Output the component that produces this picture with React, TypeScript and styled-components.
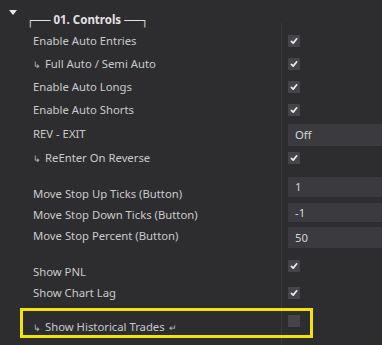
import styled, { createGlobalStyle } from "styled-components";

type Prop = {
  label: string;
  kind: "check" | "empty" | "input";
  value?: string;
  sub?: boolean;
  ret?: boolean;
  h: number;
  lp: number;
  vp: number;
  ih?: number;
  mark?: boolean;
};

const Props: Prop[] = [
  { label: "Enable Auto Entries", kind: "check", h: 23, lp: 3, vp: 5 },
  { label: "Full Auto / Semi Auto", kind: "check", sub: true, h: 23, lp: 3, vp: 5 },
  { label: "Enable Auto Longs", kind: "check", h: 23, lp: 3, vp: 5 },
  { label: "Enable Auto Shorts", kind: "check", h: 23, lp: 3, vp: 5 },
  { label: "REV - EXIT", kind: "input", value: "Off", h: 25, lp: 4, vp: 2, ih: 22 },
  { label: "ReEnter On Reverse", kind: "check", sub: true, h: 23, lp: 3, vp: 5 },
  { label: "Move Stop Up Ticks (Button)", kind: "input", value: "1", h: 30, lp: 16, vp: 7, ih: 20 },
  { label: "Move Stop Down Ticks (Button)", kind: "input", value: "-1", h: 25, lp: 7, vp: 3, ih: 19 },
  { label: "Move Stop Percent (Button)", kind: "input", value: "50", h: 25, lp: 3, vp: 2, ih: 21 },
  { label: "Show PNL", kind: "check", h: 32, lp: 14, vp: 10 },
  { label: "Show Chart Lag", kind: "check", h: 24, lp: 3, vp: 5 },
  { label: "Show Historical Trades", kind: "empty", sub: true, ret: true, h: 39, lp: 13, vp: 9, mark: true },
];

export default function App() {
  return (
    <>
      <GlobalStyle />
      <Panel>
        <Header>
          <Category>
            <Caret />
            <Title>┌── 01. Controls ──┐</Title>
          </Category>
          <Divider />
        </Header>
        {Props.map((p) => (
          <Row key={p.label} $h={p.h}>
            <Label $pt={p.lp}>
              {p.sub && <Hook>↳</Hook>}
              {p.label}
              {p.ret && <Ret>↵</Ret>}
            </Label>
            <Value $pt={p.vp}>
              {p.kind === "input" ? (
                <Input $h={p.ih || 21}>{p.value}</Input>
              ) : (
                <Check>
                  {p.kind === "check" && (
                    <svg width="12" height="12" viewBox="0 0 12 12">
                      <path
                        d="M3.4 6.3 L5.2 8.1 L8.7 3.8"
                        fill="none"
                        stroke="#ececec"
                        strokeWidth="1.7"
                        strokeLinecap="round"
                        strokeLinejoin="round"
                      />
                    </svg>
                  )}
                </Check>
              )}
            </Value>
            {p.mark && <Highlight />}
          </Row>
        ))}
      </Panel>
    </>
  );
}

const GlobalStyle = createGlobalStyle`
  body {
    margin: 0;
    background: #2d2d30;
  }
`;

const Panel = styled.div`
  width: 382px;
  height: 345px;
  overflow: hidden;
  background: #2d2d30;
  font-family: "Noto Sans", "Open Sans", sans-serif;
  font-size: 11.3px;
  color: #cacaca;
`;

const Header = styled.div`
  height: 30px;
  display: grid;
  grid-template-columns: 281px 1fr;
`;

const Category = styled.div`
  display: flex;
  align-items: flex-start;
  padding-left: 9px;
`;

const Divider = styled.div`
  margin-top: 23px;
  border-left: 1px solid #3b3b3e;
`;

const Caret = styled.div`
  margin-top: 10px;
  width: 0;
  height: 0;
  border-left: 4px solid transparent;
  border-right: 4px solid transparent;
  border-top: 5px solid #e8e8e8;
`;

const Title = styled.div`
  margin-left: 9px;
  margin-top: 12px;
  line-height: 16px;
  font-weight: 700;
  font-size: 11.5px;
  color: #e2e2e2;
  white-space: nowrap;
`;

const Row = styled.div<{ $h: number }>`
  position: relative;
  display: grid;
  grid-template-columns: 281px 1fr;
  height: ${(p) => p.$h}px;
`;

const Label = styled.div<{ $pt: number }>`
  padding-left: 33px;
  padding-top: ${(p) => p.$pt}px;
  line-height: 16px;
  white-space: nowrap;
  overflow: hidden;
`;

const Hook = styled.span`
  font-size: 9px;
  margin-right: 4px;
  color: #bdbdbd;
`;

const Ret = styled.span`
  font-size: 9px;
  margin-left: 4px;
  color: #bdbdbd;
`;

const Value = styled.div<{ $pt: number }>`
  border-left: 1px solid #3b3b3e;
  padding-left: 6px;
  padding-top: ${(p) => p.$pt}px;
`;

const Check = styled.div`
  width: 12px;
  height: 12px;
  background: #454549;
`;

const Input = styled.div<{ $h: number }>`
  height: ${(p) => p.$h}px;
  line-height: ${(p) => p.$h}px;
  background: #3b3b3f;
  padding-left: 7px;
  color: #d6d6d6;
`;

const Highlight = styled.div`
  position: absolute;
  left: 20px;
  top: 2px;
  width: 293px;
  height: 30px;
  box-sizing: border-box;
  border: 3px solid #f2e30b;
  pointer-events: none;
`;
